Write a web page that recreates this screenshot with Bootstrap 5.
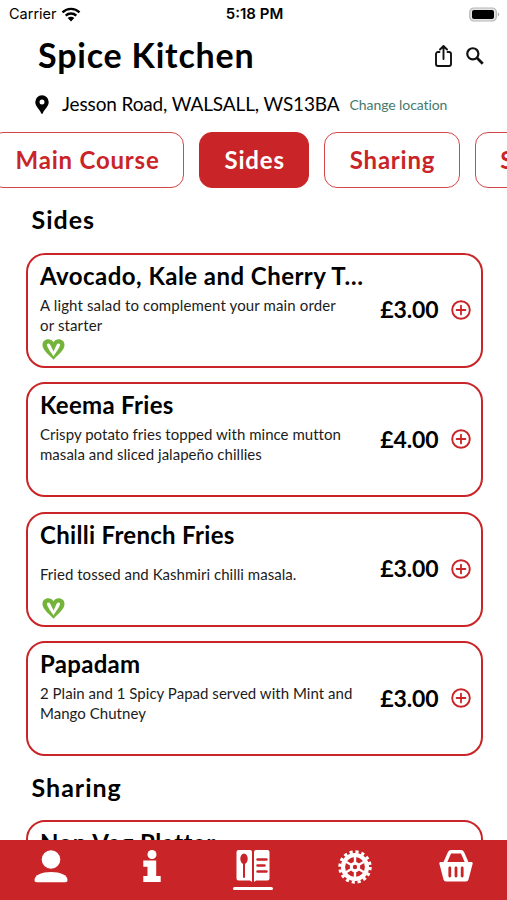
<!DOCTYPE html>
<html lang="en">
<head>
<meta charset="utf-8">
<meta name="viewport" content="width=device-width, initial-scale=1">
<title>Spice Kitchen</title>
<link href="https://cdn.jsdelivr.net/npm/bootstrap@5.3.0/dist/css/bootstrap.min.css" rel="stylesheet">
<style>
:root{--brand:#c92528}
body{font-family:Lato,"Open Sans",sans-serif;font-variant-ligatures:none;color:#000;background:#fff}
svg{display:block;flex:none}
.screen{height:900px}
.status{height:28px;font:14.5px/28px Inter,sans-serif;padding:0 7px 0 9px}
.status .side{flex:1}
.status .clock{font-weight:600;font-size:15px}
.head{height:56px;padding:0 23px 3px 38px}
.head h1{font-size:34px;letter-spacing:.8px;line-height:52px}
.tools{gap:14px;padding-top:2px}
.place{height:40px;padding-left:35px}
.place .addr{font-size:19px;letter-spacing:-.13px;margin-left:13px}
.place .change{font-size:14px;letter-spacing:-.08px;color:#457a6c;margin-left:10px}
.chips{margin-top:8px;height:56px;gap:15px;margin-left:-10px}
.chip{height:56px;flex:none;border:1.5px solid #d2474a;border-radius:13px;color:var(--brand);font-size:24px;font-weight:700;padding:0 23.5px 0 24.5px;line-height:53px;letter-spacing:.8px}
.chip:hover,.chip.active{color:#fff;background:var(--brand);border-color:var(--brand)}
.section-title{font-size:25px;font-weight:700;letter-spacing:1px;line-height:30px;margin:15.5px 0 18px 31.5px}
.menu{padding:1px 24.5px 0 25.5px}
.dish{height:115px;border:2.5px solid var(--brand);border-radius:19px;padding:5px 10px 0 12.5px;margin-bottom:14.5px}
.dish:last-child{margin-bottom:13.5px}
.dish h3{font-size:24px;font-weight:700;letter-spacing:.3px;line-height:32px;margin:0;width:330px}
.dish h3.long{letter-spacing:.45px}
.desc{height:40px;width:325px;font-size:15px;line-height:20px;letter-spacing:.03px;color:#1c1c1c;margin-top:3px}
.desc.wide{letter-spacing:.13px}
.buy{padding-bottom:6px}
.price{font-size:23px;font-weight:700;letter-spacing:-.1px;margin-right:12px}
.tabs{height:60px;background:var(--brand)}
.tabs a{width:20%;height:60px;padding-top:10px}
.tabs .line{width:40px;height:3px;border-radius:2px;background:#fff;margin-top:4px}
</style>
<script src="https://cdn.jsdelivr.net/npm/bootstrap@5.3.0/dist/js/bootstrap.bundle.min.js"></script>
</head>
<body>
<svg class="d-none" aria-hidden="true">
  <symbol id="plus" viewBox="0 0 20 20"><circle cx="10" cy="10" r="8.8" fill="none" stroke="#c92528" stroke-width="1.9"/><path d="M10 5.6v8.8M5.6 10h8.8" stroke="#c92528" stroke-width="1.8" stroke-linecap="round"/></symbol>
  <symbol id="vegan" viewBox="0 0 22 21"><path d="M11 20.800C7 16 0 11.500 0 6 0 2.500 2.500 .3 5.700 .3 8 .3 10 1.400 11 3.200 12 1.400 14 .3 16.300 .3 19.500 .3 22 2.500 22 6 22 11.500 15 16 11 20.800z" fill="#74b43a"/><path d="M4.400 5.200Q6.200 3.600 7.900 6L11 12.500 14 6Q15.600 3.500 17.600 5.200C17.500 8.500 13.500 13 11 17.400 8.500 13 4.600 9 4.400 5.200z" fill="#fff"/></symbol>
</svg>
<div class="screen d-flex flex-column overflow-hidden position-relative">
  <div class="status d-flex align-items-center flex-shrink-0">
    <div class="side d-flex align-items-center">Carrier
      <svg class="ms-1" width="20" height="15" viewBox="0 0 20 15" fill="none" stroke="#000" stroke-width="2.4"><path d="M1.500 5.300a12.200 12.200 0 0 1 17 0M4.700 8.600a7.600 7.600 0 0 1 10.600 0"/><path d="M10 14.500l-3.300-3.400a4.700 4.700 0 0 1 6.600 0z" fill="#000" stroke="none"/></svg>
    </div>
    <div class="clock">5:18 PM</div>
    <div class="side d-flex justify-content-end"><svg width="31" height="15" viewBox="0 0 31 15"><rect x=".8" y="1" width="26.500" height="13" rx="4" fill="#e4e4e4" stroke="#b5b5b5" stroke-width="1.200"/><rect x="3" y="3" width="22" height="9" rx="2" fill="#000"/><path d="M28.800 5.300c2 .8 2 3.600 0 4.400z" fill="#b5b5b5"/></svg></div>
  </div>
  <header class="head d-flex align-items-center justify-content-between flex-shrink-0">
    <h1 class="fw-bold m-0">Spice Kitchen</h1>
    <div class="tools d-flex align-items-center">
      <svg width="17" height="22" viewBox="0 0 17 22" fill="none" stroke="#111" stroke-width="1.900" stroke-linecap="round" stroke-linejoin="round"><path d="M4.500 7H3a2 2 0 0 0-2 2v10a2 2 0 0 0 2 2h11a2 2 0 0 0 2-2V9a2 2 0 0 0-2-2h-1.500M8.500 14V1.200M5 4.500l3.500-3.500L12 4.500"/></svg>
      <svg width="18" height="18" viewBox="0 0 19 19" fill="none" stroke="#111"><circle cx="7.200" cy="7.200" r="5.900" stroke-width="2.300"/><path d="M11.700 11.700l6 6" stroke-width="2.900"/></svg>
    </div>
  </header>
  <div class="place d-flex align-items-center flex-shrink-0">
    <svg width="14" height="19" viewBox="0 0 14 19"><path fill="#000" fill-rule="evenodd" d="M7 .3a6.600 6.600 0 0 1 6.700 6.700c0 4.600-4.600 7.600-5.800 11.200-.3.800-1.500.8-1.800 0C4.900 14.600.3 11.600.3 7A6.600 6.600 0 0 1 7 .3zm0 4.300a2.500 2.500 0 1 0 0 5 2.500 2.500 0 0 0 0-5z"/></svg>
    <span class="addr">Jesson Road, WALSALL, WS13BA</span>
    <a href="#" class="change text-decoration-none">Change location</a>
  </div>
  <nav class="chips d-flex flex-nowrap flex-shrink-0">
    <a href="#" class="btn chip">Main Course</a><a href="#" class="btn chip active">Sides</a><a href="#" class="btn chip">Sharing</a><a href="#" class="btn chip">S</a>
  </nav>
  <main class="flex-shrink-0">
    <h2 class="section-title">Sides</h2>
    <div class="menu">
      <article class="dish d-flex">
        <div><h3 class="long">Avocado, Kale and Cherry T…</h3>
          <div class="desc wide d-flex align-items-center">A light salad to complement your main order<br>or starter</div>
          <svg class="mt-1" width="27" height="21"><use href="#vegan"/></svg></div>
        <div class="buy ms-auto d-flex align-items-center"><span class="price">£3.00</span><svg width="20" height="20"><use href="#plus"/></svg></div>
      </article>
      <article class="dish d-flex">
        <div><h3>Keema Fries</h3>
          <div class="desc d-flex align-items-center">Crispy potato fries topped with mince mutton<br>masala and sliced jalapeño chillies</div></div>
        <div class="buy ms-auto d-flex align-items-center"><span class="price">£4.00</span><svg width="20" height="20"><use href="#plus"/></svg></div>
      </article>
      <article class="dish d-flex">
        <div><h3>Chilli French Fries</h3>
          <div class="desc d-flex align-items-center">Fried tossed and Kashmiri chilli masala.</div>
          <svg class="mt-1" width="27" height="21"><use href="#vegan"/></svg></div>
        <div class="buy ms-auto d-flex align-items-center"><span class="price">£3.00</span><svg width="20" height="20"><use href="#plus"/></svg></div>
      </article>
      <article class="dish d-flex">
        <div><h3>Papadam</h3>
          <div class="desc d-flex align-items-center">2 Plain and 1 Spicy Papad served with Mint and<br>Mango Chutney</div></div>
        <div class="buy ms-auto d-flex align-items-center"><span class="price">£3.00</span><svg width="20" height="20"><use href="#plus"/></svg></div>
      </article>
    </div>
    <h2 class="section-title">Sharing</h2>
    <div class="menu pt-0"><article class="dish"><h3 class="long">Non Veg Platter</h3></article></div>
  </main>
  <nav class="tabs d-flex position-absolute bottom-0 start-0 w-100">
    <a href="#" class="d-flex flex-column align-items-center"><svg width="34" height="33" viewBox="0 0 34 33" fill="#fff"><circle cx="17" cy="9.500" r="9.300"/><path d="M.5 30c0-5 7-8 16.500-8s16.500 3 16.500 8c0 1.500-.8 2.200-2.200 2.200H2.700C1.300 32.200.5 31.500.5 30z"/></svg></a>
    <a href="#" class="d-flex flex-column align-items-center"><svg width="18" height="33" viewBox="0 0 18 33" fill="#fff"><circle cx="9" cy="4.500" r="4.500"/><path d="M.3 10.500h12.900V26h4.500v6H.3v-6h4.200v-9.300H.3z"/></svg></a>
    <a href="#" class="d-flex flex-column align-items-center"><svg width="34" height="33" viewBox="0 0 34 33"><path d="M2.500 0h11.500a2 2 0 0 1 2 2v30l-2-1.500H2.500A2 2 0 0 1 .5 28.500V2A2 2 0 0 1 2.500 0zM20 0h11.500a2 2 0 0 1 2 2v26.500a2 2 0 0 1-2 2H20L18 32V2a2 2 0 0 1 2-2z" fill="#fff"/><ellipse cx="8" cy="8.700" rx="3.700" ry="5.200" fill="#c92528"/><path d="M8 13v14" stroke="#c92528" stroke-width="2" stroke-linecap="round"/><path d="M21.500 9.500h9M21.500 15.500h7M21.500 21.500h9" stroke="#c92528" stroke-width="2.500" stroke-linecap="round"/></svg><span class="line"></span></a>
    <a href="#" class="d-flex flex-column align-items-center"><svg width="34" height="34" viewBox="-17 -17 34 34" fill="none" stroke="#fff"><circle r="15.200" stroke-width="3" stroke-dasharray="3.180 2.789"/><circle r="12" stroke-width="4.200"/><circle r="3.700" stroke-width="3"/><path d="M0-4v-7M0 4v7M3.500-2l6-3.500M3.500 2l6 3.500M-3.500-2l-6-3.500M-3.500 2l-6 3.500" stroke-width="2.400"/></svg></a>
    <a href="#" class="d-flex flex-column align-items-center"><svg width="34" height="33" viewBox="0 0 34 33"><path d="M6 13L10.500 2.800Q11 1.700 12 1.700H22Q23 1.700 23.500 2.800L28 13" fill="none" stroke="#fff" stroke-width="3.400"/><path d="M1.500 12h31q1.500 0 1.200 1.500l-4.200 16Q29 31.500 27 31.500H7Q5 31.500 4.500 29.500L.3 13.500Q0 12 1.500 12z" fill="#fff"/><path d="M10.800 18v8M17 18v8M23.200 18v8" stroke="#c92528" stroke-width="2.800" stroke-linecap="round"/></svg></a>
  </nav>
</div>
</body>
</html>
